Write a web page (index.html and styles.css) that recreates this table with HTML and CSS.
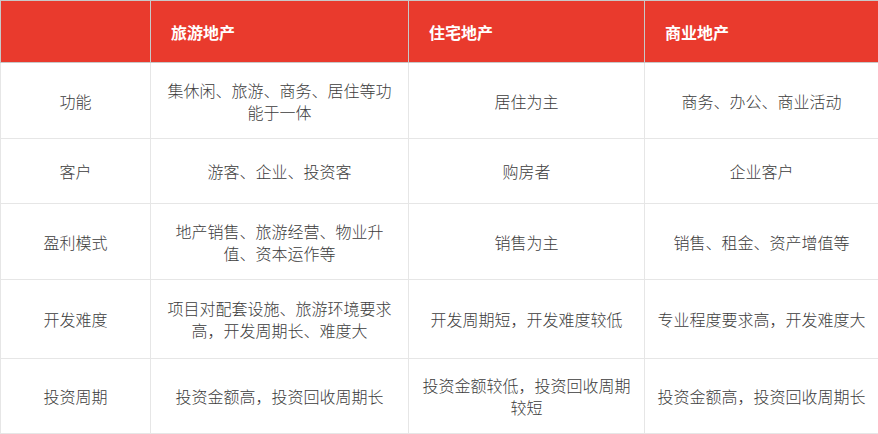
FILE: index.html
```html
<!DOCTYPE html>
<html lang="zh-CN">
<head>
<meta charset="utf-8">
<title>地产类型对比</title>
<link rel="stylesheet" href="styles.css">
</head>
<body>
<table class="compare">
  <colgroup>
    <col class="c1">
    <col class="c2">
    <col class="c3">
    <col class="c4">
  </colgroup>
  <thead>
    <tr class="head">
      <th></th>
      <th>旅游地产</th>
      <th>住宅地产</th>
      <th>商业地产</th>
    </tr>
  </thead>
  <tbody>
    <tr class="r1">
      <td>功能</td>
      <td>集休闲、旅游、商务、居住等功能于一体</td>
      <td>居住为主</td>
      <td>商务、办公、商业活动</td>
    </tr>
    <tr class="r2">
      <td>客户</td>
      <td>游客、企业、投资客</td>
      <td>购房者</td>
      <td>企业客户</td>
    </tr>
    <tr class="r3">
      <td>盈利模式</td>
      <td>地产销售、旅游经营、物业升值、资本运作等</td>
      <td>销售为主</td>
      <td>销售、租金、资产增值等</td>
    </tr>
    <tr class="r4">
      <td>开发难度</td>
      <td>项目对配套设施、旅游环境要求高，开发周期长、难度大</td>
      <td>开发周期短，开发难度较低</td>
      <td>专业程度要求高，开发难度大</td>
    </tr>
    <tr class="r5">
      <td>投资周期</td>
      <td>投资金额高，投资回收周期长</td>
      <td>投资金额较低，投资回收周期较短</td>
      <td>投资金额高，投资回收周期长</td>
    </tr>
  </tbody>
</table>
</body>
</html>
```

FILE: styles.css
```css
html, body {
  margin: 0;
  padding: 0;
  background: #ffffff;
}

.compare {
  width: 878px;
  border-collapse: collapse;
  table-layout: fixed;
  font-family: "Noto Sans CJK SC", "Noto Sans", sans-serif;
  font-size: 16px;
  font-weight: 300;
  line-height: 22px;
  color: #3c3c3c;
}

.c1 { width: 150px; }
.c2 { width: 258px; }
.c3 { width: 236px; }
.c4 { width: 234px; }

.compare th {
  background: #e93a2d;
  color: #ffffff;
  font-weight: 700;
  text-align: left;
  padding: 0 20px;
  border: 1px solid #c8c8c8;
}

.compare td {
  text-align: center;
  vertical-align: middle;
  padding: 0 12px;
  border: 1px solid #e6e6e6;
}

.compare .head th { height: 61px; }
.r1 td { height: 75px; }
.r2 td { height: 64px; }
.r3 td { height: 75px; }
.r4 td { height: 78px; }
.r5 td { height: 74px; }
```
